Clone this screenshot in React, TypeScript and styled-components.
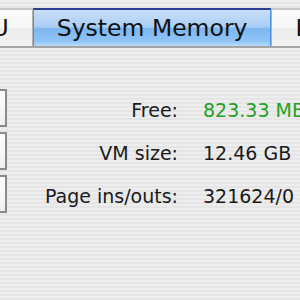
import React from "react";
import styled, { createGlobalStyle } from "styled-components";

interface StatRow {
  label: string;
  value: string;
  highlight?: boolean;
}

interface TabProps {
  active?: boolean;
}

interface ValueProps {
  highlight?: boolean;
}

const tabs = ["CPU", "System Memory", "Disk Activity"];

const rows: StatRow[] = [
  { label: "Free:", value: "823.33 MB", highlight: true },
  { label: "VM size:", value: "12.46 GB" },
  { label: "Page ins/outs:", value: "321624/0" },
];

export default function App() {
  return (
    <>
      <GlobalStyle />
      <Window>
        <TabBar>
          {tabs.map((t, i) => (
            <Tab key={t} active={i === 1}>
              {t}
            </Tab>
          ))}
        </TabBar>
        <Stats>
          {rows.map((r) => (
            <Row key={r.label}>
              <Swatch />
              <Label>{r.label}</Label>
              <Value highlight={r.highlight}>{r.value}</Value>
            </Row>
          ))}
        </Stats>
      </Window>
    </>
  );
}

const GlobalStyle = createGlobalStyle`
  body {
    margin: 0;
    font-family: "DejaVu Sans", "Liberation Sans", sans-serif;
  }
`;

const Window = styled.div`
  width: 300px;
  height: 300px;
  overflow: hidden;
  background: repeating-linear-gradient(
    to bottom,
    #ededed 0px,
    #ededed 2px,
    #e5e5e5 2px,
    #e5e5e5 4px
  );
  padding-top: 8px;
  box-sizing: border-box;
`;

const TabBar = styled.div`
  display: flex;
  height: 38px;
  margin-left: -63px;
  border-bottom: 2px solid #a4a4a4;
  box-sizing: content-box;
  width: max-content;
`;

const Tab = styled.div<TabProps>`
  height: 38px;
  box-sizing: border-box;
  padding: 0 23px 0 23px;
  display: flex;
  align-items: center;
  font-size: 23.5px;
  color: #111;
  white-space: nowrap;
  border-top: 2px solid ${(p) => (p.active ? "#2b3f93" : "#c8c8c8")};
  border-left: 1px solid ${(p) => (p.active ? "#4f8fd8" : "#b4b4b4")};
  border-right: 1px solid ${(p) => (p.active ? "#4f8fd8" : "#b4b4b4")};
  background: ${(p) =>
    p.active
      ? "linear-gradient(to bottom, #c9e0f8 0%, #a9cdf4 48%, #7db6f1 50%, #8dc3f6 85%, #b5dafa 100%)"
      : "linear-gradient(to bottom, #fbfbfb 0%, #f6f6f6 48%, #ececec 50%, #f2f2f2 100%)"};
`;

const Stats = styled.div`
  display: flex;
  flex-direction: column;
  gap: 5px;
  margin-top: 41px;
`;

const Row = styled.div`
  display: grid;
  grid-template-columns: 7px 171px 203px;
  align-items: center;
  height: 38px;
`;

const Swatch = styled.div`
  width: 30px;
  height: 38px;
  margin-left: -23px;
  box-sizing: border-box;
  border: 2px solid #8a8a8a;
  background: linear-gradient(to bottom, #fefefe, #f0f0f0);
`;

const Label = styled.div`
  font-size: 19px;
  color: #1a1a1a;
  text-align: right;
  white-space: nowrap;
  padding-top: 3px;
`;

const Value = styled.div<ValueProps>`
  font-size: 19px;
  padding-left: 25px;
  padding-top: 3px;
  white-space: nowrap;
  color: ${(p) => (p.highlight ? "#22a022" : "#1a1a1a")};
`;
